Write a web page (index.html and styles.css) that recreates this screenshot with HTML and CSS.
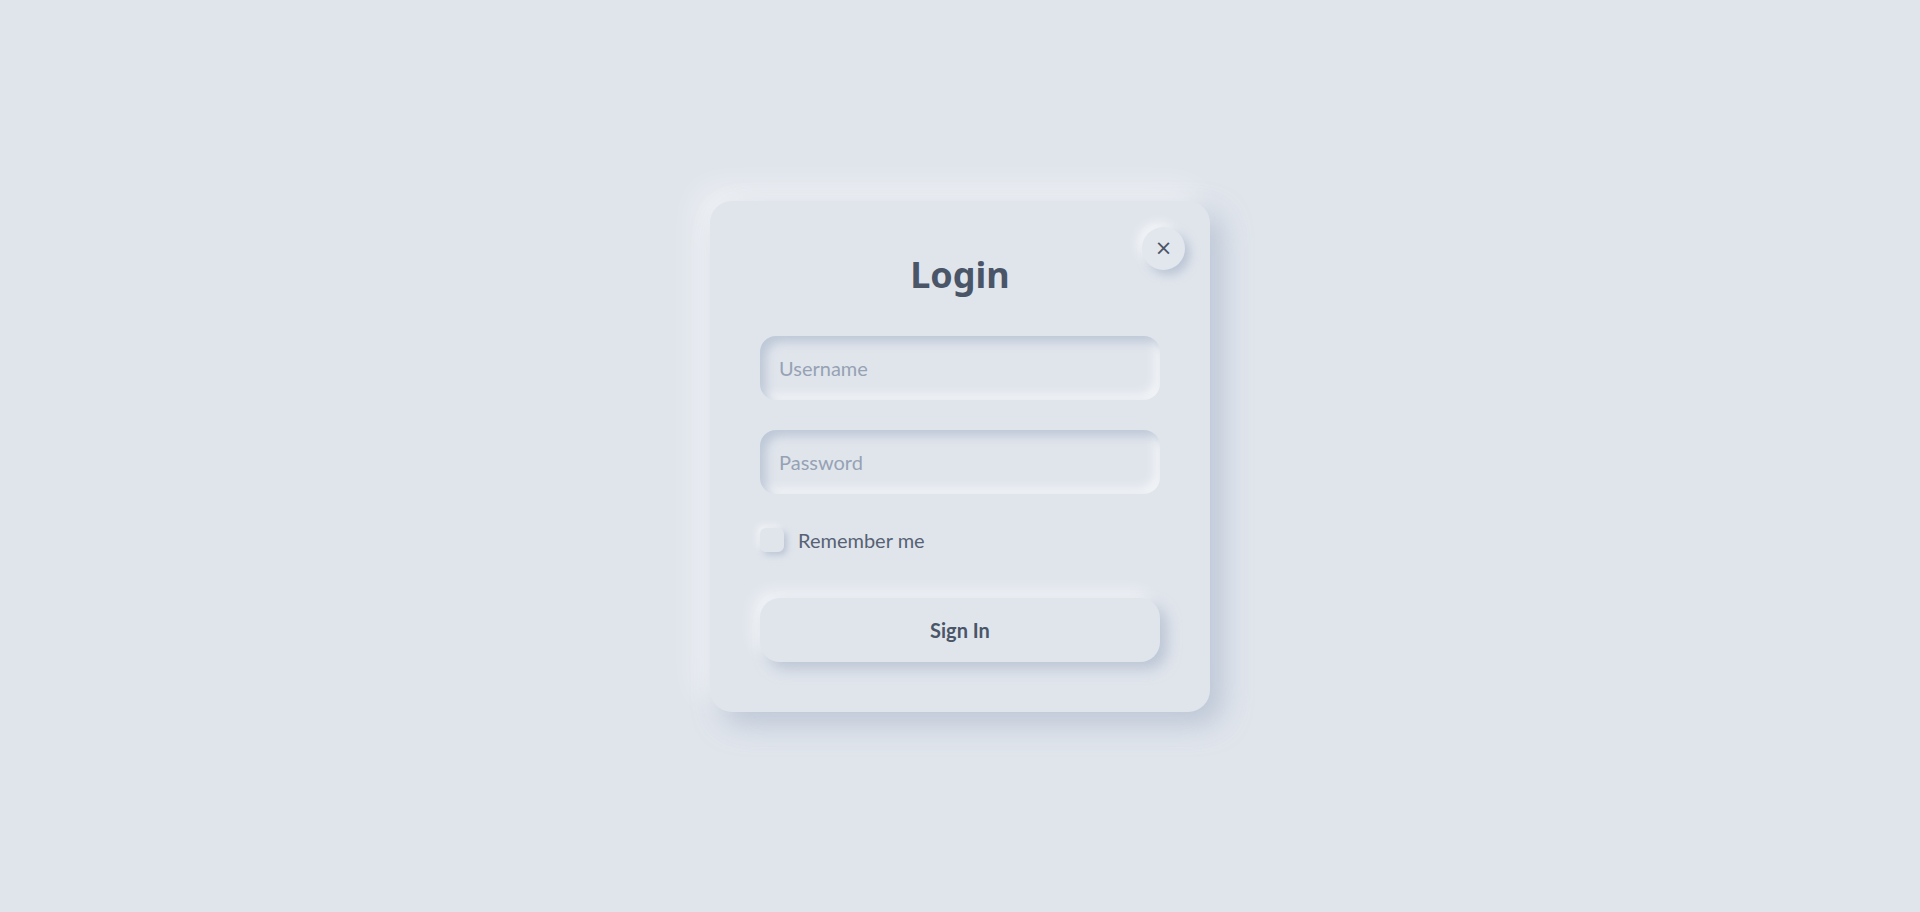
FILE: index.html
```html
<!DOCTYPE html>
<html lang="en">
<head>
<meta charset="utf-8">
<title>Login</title>
<link rel="stylesheet" href="styles.css">
</head>
<body>
<main class="page">
  <form class="card" onsubmit="return false">
    <button type="button" class="close" aria-label="Close">&times;</button>
    <h1 class="title">Login</h1>
    <input class="field" type="text" placeholder="Username">
    <input class="field field-gap" type="password" placeholder="Password">
    <label class="remember">
      <span class="check"></span>
      <span class="remember-text">Remember me</span>
    </label>
    <button type="submit" class="signin">Sign In</button>
  </form>
</main>
</body>
</html>
```

FILE: styles.css
```css
* { box-sizing: border-box; }

html, body {
  margin: 0;
  padding: 0;
  background: #e0e5ec;
}

body {
  font-family: "Lato", "Noto Sans", sans-serif;
  color: #4a5568;
}

.page {
  min-height: 100vh;
  display: flex;
  align-items: center;
  justify-content: center;
}

.card {
  position: relative;
  width: 500px;
  padding: 50px;
  background: #e0e5ec;
  border-radius: 22px;
  display: flex;
  flex-direction: column;
  box-shadow: 12px 12px 28px rgba(163, 177, 198, 0.6),
              -12px -12px 28px rgba(255, 255, 255, 0.55);
}

.close {
  position: absolute;
  top: 26px;
  right: 25px;
  width: 43px;
  height: 43px;
  border: none;
  border-radius: 50%;
  background: #e2e7ee;
  color: #4a5568;
  font-family: "DejaVu Sans", sans-serif;
  font-size: 21px;
  line-height: 43px;
  padding: 0;
  text-align: center;
  box-shadow: 5px 5px 10px rgba(163, 177, 198, 0.6),
              -5px -5px 10px rgba(255, 255, 255, 0.6);
}

.title {
  margin: 1px 0 38px;
  font-family: "Noto Sans", "Lato", sans-serif;
  font-size: 36px;
  line-height: 46px;
  font-weight: 700;
  text-align: center;
  color: #4a5568;
}

.field {
  display: block;
  width: 100%;
  height: 64px;
  padding: 0 19px;
  border: none;
  outline: none;
  border-radius: 16px;
  background: #e0e5ec;
  font-family: inherit;
  font-size: 20px;
  color: #4a5568;
  box-shadow: inset 6px 6px 10px rgba(163, 177, 198, 0.55),
              inset -6px -6px 10px rgba(255, 255, 255, 0.55);
}

.field::placeholder {
  color: #96a2b4;
}

.field-gap {
  margin-top: 30px;
}

.remember {
  margin-top: 34px;
  display: flex;
  align-items: center;
  gap: 14px;
  height: 24px;
}

.check {
  width: 24px;
  height: 24px;
  border-radius: 6px;
  background: #e0e5ec;
  box-shadow: 3px 3px 6px rgba(163, 177, 198, 0.6),
              -3px -3px 6px rgba(255, 255, 255, 0.6);
}

.remember-text {
  font-size: 20px;
  color: #566274;
}

.signin {
  margin-top: 46px;
  width: 100%;
  height: 64px;
  border: none;
  border-radius: 20px;
  background: #e0e5ec;
  font-family: inherit;
  font-size: 20px;
  font-weight: 700;
  color: #4a5568;
  box-shadow: 7px 7px 14px rgba(163, 177, 198, 0.6),
              -7px -7px 14px rgba(255, 255, 255, 0.55);
}
```
